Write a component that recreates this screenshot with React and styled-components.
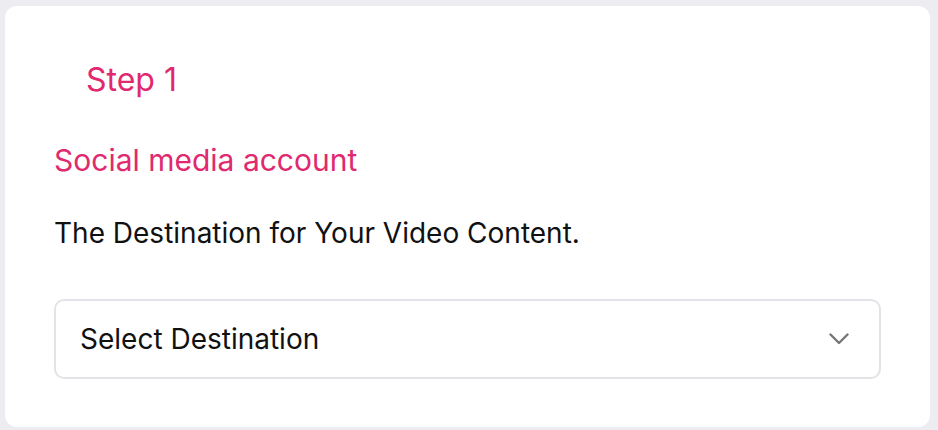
import React from 'react'
import styled, { createGlobalStyle } from 'styled-components'

const GlobalStyle = createGlobalStyle`
  html, body {
    margin: 0;
    padding: 0;
    background: #ececf1;
    font-family: Inter, "Noto Sans", sans-serif;
  }
`

export default function App() {
  return (
    <>
      <GlobalStyle />
      <CardStyled>
        <StepStyled>Step 1</StepStyled>
        <TitleStyled>Social media account</TitleStyled>
        <TextStyled>The Destination for Your Video Content.</TextStyled>
        <SelectStyled>
          <span>Select Destination</span>
          <svg width="20" height="12" viewBox="0 0 20 12" fill="none">
            <path
              d="M1.5 1.5L10 10L18.5 1.5"
              stroke="#767676"
              strokeWidth="2.4"
              strokeLinecap="round"
              strokeLinejoin="round"
            />
          </svg>
        </SelectStyled>
      </CardStyled>
    </>
  )
}

const CardStyled = styled.div`
  box-sizing: border-box;
  width: 925px;
  height: 421px;
  margin: 6px 0 0 5px;
  background: #ffffff;
  border-radius: 12px;
  padding: 56px 49px 0 49px;
  display: flex;
  flex-direction: column;
`

const StepStyled = styled.div`
  color: #e0296f;
  font-size: 32px;
  line-height: 36px;
  padding-left: 32px;
`

const TitleStyled = styled.div`
  color: #e0296f;
  font-size: 30px;
  line-height: 36px;
  margin-top: 44px;
`

const TextStyled = styled.div`
  color: #111111;
  font-size: 28px;
  line-height: 34px;
  margin-top: 38px;
`

const SelectStyled = styled.div`
  box-sizing: border-box;
  margin-top: 49px;
  width: 827px;
  height: 80px;
  flex-shrink: 0;
  border: 2px solid #e3e3e8;
  border-radius: 10px;
  padding: 0 30px 0 24px;
  display: flex;
  align-items: center;
  justify-content: space-between;
  font-size: 28px;
  color: #111111;
`
